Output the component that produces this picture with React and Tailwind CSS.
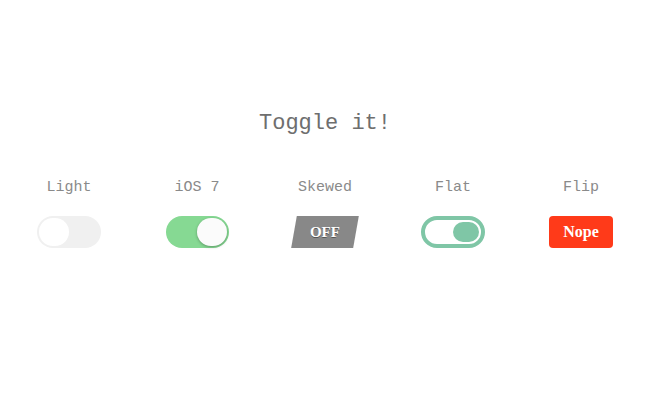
import { useState } from "react";

const Label = ({ children }) => (
    <div className="text-[15px] leading-[20px] text-[#8a8a8a]">{children}</div>
);

const App = () => {
    const [light, setLight] = useState(false);
    const [ios, setIos] = useState(true);
    const [skew, setSkew] = useState(false);
    const [flat, setFlat] = useState(true);
    const [flip, setFlip] = useState(false);

    return (
        <div
            className="min-h-[407px] bg-white pt-[110px]"
            style={{ fontFamily: '"Liberation Mono", "DejaVu Sans Mono", monospace' }}
        >
            <h1 className="text-center text-[22px] leading-[28px] text-[#6e6e6e]">Toggle it!</h1>

            <div className="mx-auto mt-[40px] grid w-[640px] grid-cols-5">
                {/* Light */}
                <div className="flex flex-col items-center gap-[18px]">
                    <Label>Light</Label>
                    <button
                        onClick={() => setLight(!light)}
                        className={`flex h-[32px] w-[64px] rounded-full p-[2px] ${light ? "justify-end bg-[#9fd6ae]" : "justify-start bg-[#f0f0f0]"}`}
                    >
                        <span className="block h-[28px] w-[30px] rounded-full bg-white" />
                    </button>
                </div>

                {/* iOS 7 */}
                <div className="flex flex-col items-center gap-[18px]">
                    <Label>iOS 7</Label>
                    <button
                        onClick={() => setIos(!ios)}
                        className={`flex h-[32px] w-[63px] rounded-full p-[2px] ${ios ? "justify-end bg-[#86d993]" : "justify-start bg-[#f0f0f0]"}`}
                    >
                        <span className="block h-[28px] w-[30px] rounded-full bg-[#fbfbfb] shadow-[0_1px_3px_rgba(0,0,0,0.3)]" />
                    </button>
                </div>

                {/* Skewed */}
                <div className="flex flex-col items-center gap-[18px]">
                    <Label>Skewed</Label>
                    <button
                        onClick={() => setSkew(!skew)}
                        className={`flex h-[32px] w-[62px] -skew-x-[10deg] items-center justify-center ${skew ? "bg-[#86d993]" : "bg-[#888888]"}`}
                    >
                        <span
                            className="skew-x-[10deg] text-[15px] font-bold text-white [text-shadow:0_1px_0_rgba(0,0,0,0.4)]"
                            style={{ fontFamily: '"Liberation Serif", serif' }}
                        >
                            {skew ? "ON" : "OFF"}
                        </span>
                    </button>
                </div>

                {/* Flat */}
                <div className="flex flex-col items-center gap-[18px]">
                    <Label>Flat</Label>
                    <button
                        onClick={() => setFlat(!flat)}
                        className={`flex h-[32px] w-[64px] rounded-full border-[4px] border-[#7fc6a6] p-[2px] ${flat ? "justify-end" : "justify-start"}`}
                    >
                        <span className="block h-[20px] w-[26px] rounded-full bg-[#7fc6a6]" />
                    </button>
                </div>

                {/* Flip */}
                <div className="flex flex-col items-center gap-[18px]">
                    <Label>Flip</Label>
                    <button
                        onClick={() => setFlip(!flip)}
                        className={`flex h-[32px] w-[64px] items-center justify-center rounded-[4px] text-[16px] font-bold text-white ${flip ? "bg-[#7fc6a6]" : "bg-[#ff3a19]"}`}
                        style={{ fontFamily: '"Liberation Serif", serif' }}
                    >
                        {flip ? "Yeah!" : "Nope"}
                    </button>
                </div>
            </div>
        </div>
    );
};

export default App;
